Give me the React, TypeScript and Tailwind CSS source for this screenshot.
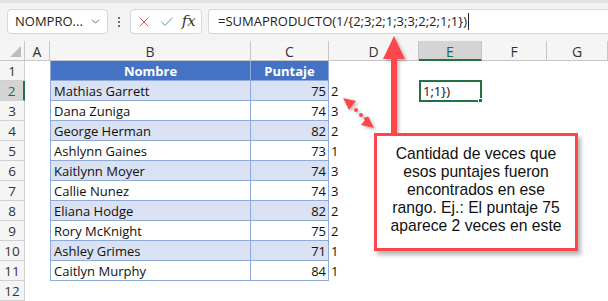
import { Check, ChevronDown, X } from 'lucide-react'

const rows: [string, number, number][] = [
  ['Mathias Garrett', 75, 2],
  ['Dana Zuniga', 74, 3],
  ['George Herman', 82, 2],
  ['Ashlynn Gaines', 73, 1],
  ['Kaitlynn Moyer', 74, 3],
  ['Callie Nunez', 74, 3],
  ['Eliana Hodge', 82, 2],
  ['Rory McKnight', 75, 2],
  ['Ashley Grimes', 71, 1],
  ['Caitlyn Murphy', 84, 1],
]

const cols = ['A', 'B', 'C', 'D', 'E', 'F', 'G']

function FormulaBar() {
  return (
    <div className="h-[41px] bg-[#f3f3f3] border-t-[3px] border-[#e3e3e3] flex items-start pt-[6px] pl-[7px]">
      {/* name box */}
      <div className="w-[101px] h-[25px] bg-white border border-[#d6d6d6] rounded-[4px] flex items-center justify-between pl-[7px] pr-[5px]">
        <span className="text-[13px] text-[#222]">NOMPRO...</span>
        <ChevronDown size={13} strokeWidth={1.6} className="text-[#555]" />
      </div>
      <div className="w-[22px] h-[25px] flex flex-col items-center justify-center gap-[2px]">
        <span className="w-[2px] h-[2px] bg-[#444] rounded-full" />
        <span className="w-[2px] h-[2px] bg-[#444] rounded-full" />
        <span className="w-[2px] h-[2px] bg-[#444] rounded-full" />
      </div>
      {/* cancel / enter / fx */}
      <div className="w-[72px] h-[25px] bg-white border border-[#d6d6d6] rounded-[4px] flex items-center justify-around px-[2px]">
        <X size={16} strokeWidth={1.4} className="text-[#e8484b]" />
        <Check size={16} strokeWidth={1.4} className="text-[#3b9e5a]" />
        <span className="text-[15px] italic text-[#333] font-['DejaVu_Serif',serif] leading-none">fx</span>
      </div>
      {/* formula input */}
      <div className="ml-[6px] flex-1 h-[25px] bg-white border border-[#d6d6d6] border-r-0 rounded-l-[4px] flex items-center pl-[9px]">
        <span className="text-[13px] text-[#222]">=SUMAPRODUCTO(1/{'{'}2;3;2;1;3;3;2;2;1;1{'}'})</span>
        <span className="w-px h-[17px] bg-[#222] ml-[1px]" />
      </div>
    </div>
  )
}

function Sheet() {
  return (
    <div className="grid grid-cols-[25px_25px_201px_78px_90px_63px_65px_61px] auto-rows-[20px] text-[13px]">
      {/* corner */}
      <div className="bg-[#f5f5f5] border-r border-b border-[#c6c6c6] flex items-end justify-end pr-[3px] pb-[3px]">
        <svg width="11" height="11" viewBox="0 0 11 11">
          <polygon points="11,0 11,11 0,11" fill="#bdbdbd" />
        </svg>
      </div>
      {cols.map((c) => (
        <div
          key={c}
          className={
            c === 'E'
              ? 'bg-[#d4d4d4] border-r border-[#c6c6c6] border-b-2 border-b-[#217346] text-[#1e6b3f] text-[14px] pt-[2px] flex items-center justify-center'
              : 'bg-[#f5f5f5] border-r border-b border-[#c6c6c6] text-[#333] text-[14px] pt-[2px] flex items-center justify-center'
          }
        >
          {c}
        </div>
      ))}

      {/* row 1 */}
      <div className="bg-[#f5f5f5] border-r border-b border-[#d0d0d0] text-[#333] text-[13.5px] pt-[2px] flex items-center justify-center">1</div>
      <div />
      <div className="bg-[#4472c4] border-l border-r border-[#8eaadb] border-b border-b-[#8eaadb] text-white font-bold pt-[2px] flex items-center justify-center">Nombre</div>
      <div className="bg-[#4472c4] border-r border-b border-[#8eaadb] text-white font-bold pt-[2px] flex items-center justify-center">Puntaje</div>
      <div />
      <div />
      <div />
      <div />

      {rows.map(([name, score, count], i) => {
        const n = i + 2
        const band = i % 2 === 0 ? 'bg-[#d9e1f2]' : 'bg-white'
        return [
          <div
            key={`h${n}`}
            className={
              n === 2
                ? 'bg-[#d4d4d4] border-r-2 border-r-[#217346] border-b border-[#d0d0d0] text-[#1e6b3f] text-[13.5px] pt-[2px] flex items-center justify-center'
                : 'bg-[#f5f5f5] border-r border-b border-[#d0d0d0] text-[#333] text-[13.5px] pt-[2px] flex items-center justify-center'
            }
          >
            {n}
          </div>,
          <div key={`a${n}`} />,
          <div key={`b${n}`} className={`${band} border-l border-r border-b border-[#8eaadb] text-[#111] pl-[3px] pt-[2px] flex items-center`}>
            {name}
          </div>,
          <div key={`c${n}`} className={`${band} border-r border-b border-[#8eaadb] text-[#111] pr-[2px] pt-[2px] flex items-center justify-end`}>
            {score}
          </div>,
          <div key={`d${n}`} className="text-[#111] pl-[2px] pt-[2px] flex items-center">{count}</div>,
          n === 2 ? (
            <div key={`e${n}`} className="relative border-2 border-[#217346] text-[#111] pl-[2px] pt-[2px] flex items-center -mt-px h-[22px]">
              1;1{'}'})
              <span className="absolute -right-[3px] -bottom-[3px] w-[5px] h-[5px] bg-[#217346] border border-white" />
            </div>
          ) : (
            <div key={`e${n}`} />
          ),
          <div key={`f${n}`} />,
          <div key={`g${n}`} />,
        ]
      })}

      {/* row 12 */}
      <div className="bg-[#f5f5f5] border-r border-b border-[#d0d0d0] text-[#333] text-[13.5px] pt-[2px] flex items-center justify-center">12</div>
    </div>
  )
}

function Annotation() {
  const red = '#fd464b'
  return (
    <>
      <svg className="absolute left-0 top-0 pointer-events-none" width="608" height="301" viewBox="0 0 608 301">
        <defs>
          <filter id="sh" x="-50%" y="-50%" width="200%" height="200%">
            <feDropShadow dx="2" dy="2" stdDeviation="1.5" floodColor="#000" floodOpacity="0.25" />
          </filter>
        </defs>
        <g filter="url(#sh)">
          {/* vertical arrow */}
          <rect x="391" y="56" width="6" height="80" fill={red} />
          <polygon points="394,36 383,59 405,59" fill={red} />
          {/* dotted double arrow */}
          <polygon points="343,98 356,101 349,110" fill={red} />
          <circle cx="356" cy="110" r="2" fill={red} />
          <circle cx="361" cy="115" r="2" fill={red} />
          <circle cx="366" cy="119" r="2" fill={red} />
          <polygon points="374,128 361,125 368,116" fill={red} />
        </g>
      </svg>
      <div className="absolute left-[374px] top-[133px] w-[204px] h-[118px] bg-white border-[3px] border-[#fd464b] shadow-[3px_4px_4px_rgba(0,0,0,0.28)] pt-[9px] text-center font-['Liberation_Sans',Arial,sans-serif] text-[15.7px] leading-[18px] text-[#111]">
        Cantidad de veces que
        <br />
        esos puntajes fueron
        <br />
        encontrados en ese
        <br />
        rango. Ej.: El puntaje 75
        <br />
        aparece 2 veces en este
      </div>
    </>
  )
}

export default function App() {
  return (
    <div className="relative w-[608px] h-[301px] overflow-hidden bg-white font-['Open_Sans',sans-serif]">
      <FormulaBar />
      <Sheet />
      <Annotation />
    </div>
  )
}
